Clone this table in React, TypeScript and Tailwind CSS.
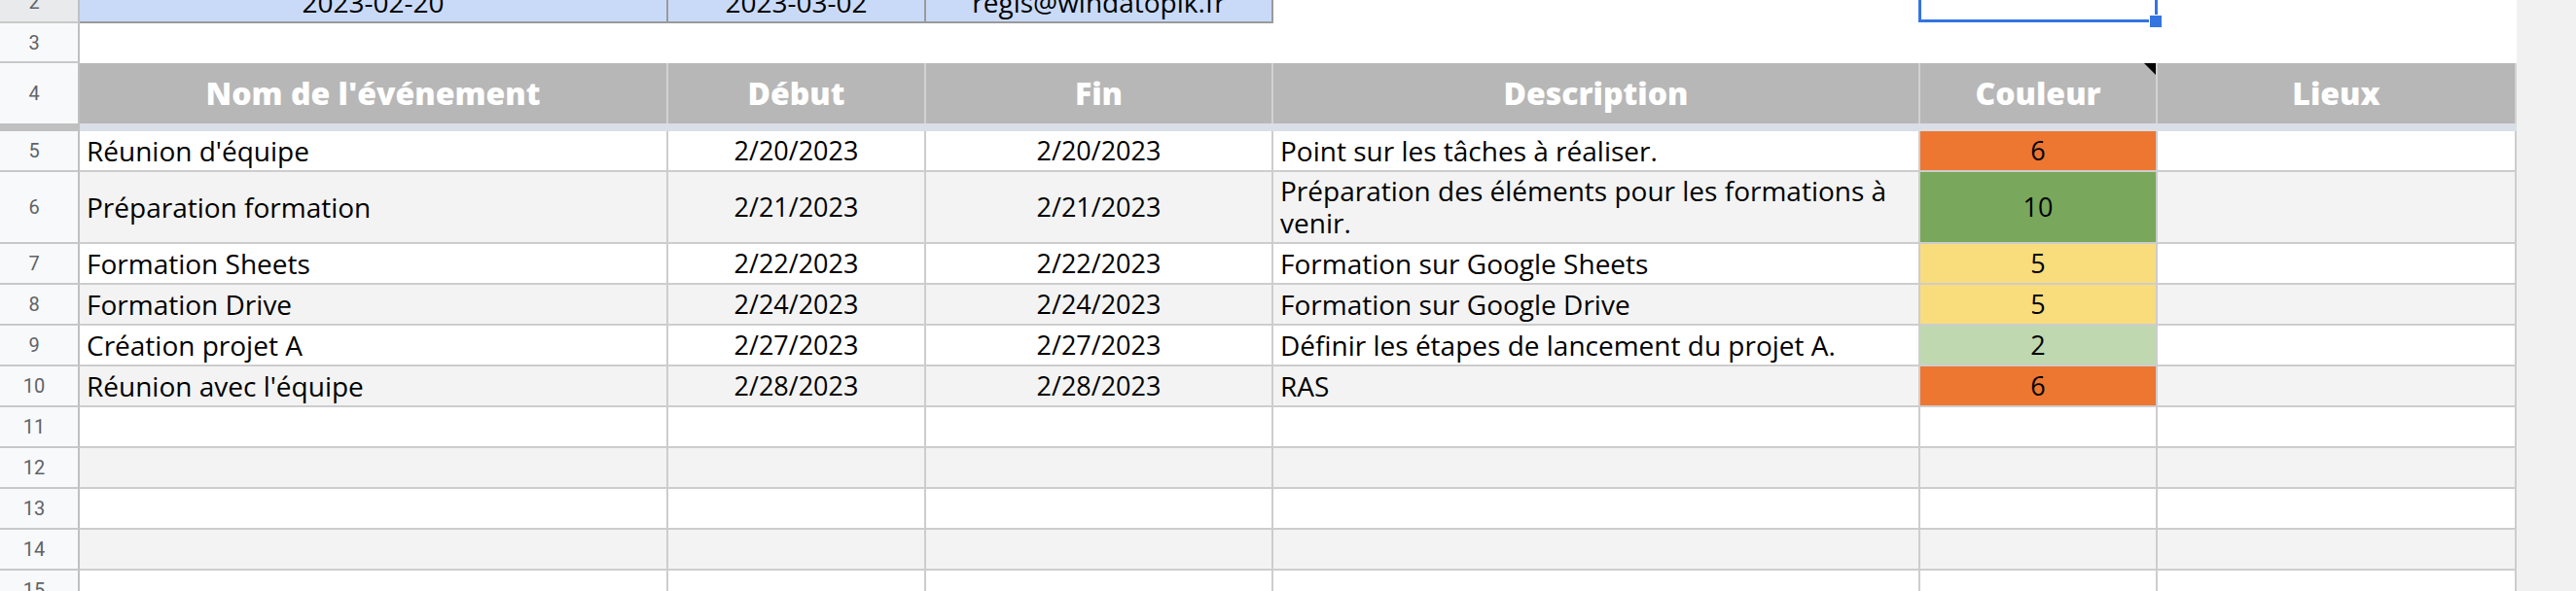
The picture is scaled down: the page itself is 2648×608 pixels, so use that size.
import React from "react";

const W = [
  "w-[605px]",
  "w-[265px]",
  "w-[357px]",
  "w-[665px]",
  "w-[244px]",
  "w-[369px]",
];

type RHProps = { n: string; h: string; bg?: string; noBottom?: boolean };

function RH({ n, h, bg = "bg-[#f8f9fa]", noBottom }: RHProps) {
  return (
    <div
      className={`${h} ${bg} w-[82px] shrink-0 flex items-center justify-center pr-[10px] border-r-2 border-r-[#c0c0c0] ${
        noBottom ? "" : "border-b-2 border-b-[#c8c8c8]"
      } font-['Roboto',sans-serif] text-[20px] text-[#5f6368]`}
    >
      {n}
    </div>
  );
}

type Ev = {
  n: string;
  d: string;
  f: string;
  desc: React.ReactNode;
  c: string;
  color: string;
  tall?: boolean;
};

const data: Ev[] = [
  {
    n: "Réunion d'équipe",
    d: "2/20/2023",
    f: "2/20/2023",
    desc: "Point sur les tâches à réaliser.",
    c: "6",
    color: "bg-[#ed7631]",
  },
  {
    n: "Préparation formation",
    d: "2/21/2023",
    f: "2/21/2023",
    desc: (
      <>
        Préparation des éléments pour les formations à
        <br />
        venir.
      </>
    ),
    c: "10",
    color: "bg-[#79a75b]",
    tall: true,
  },
  {
    n: "Formation Sheets",
    d: "2/22/2023",
    f: "2/22/2023",
    desc: "Formation sur Google Sheets",
    c: "5",
    color: "bg-[#f9dc7c]",
  },
  {
    n: "Formation Drive",
    d: "2/24/2023",
    f: "2/24/2023",
    desc: "Formation sur Google Drive",
    c: "5",
    color: "bg-[#f9dc7c]",
  },
  {
    n: "Création projet A",
    d: "2/27/2023",
    f: "2/27/2023",
    desc: "Définir les étapes de lancement du projet A.",
    c: "2",
    color: "bg-[#bfd8b0]",
  },
  {
    n: "Réunion avec l'équipe",
    d: "2/28/2023",
    f: "2/28/2023",
    desc: "RAS",
    c: "6",
    color: "bg-[#ed7631]",
  },
];

const cellB = "border-r-2 border-b-2 border-[#cdcdcd] shrink-0 flex items-center";

export default function App() {
  const font = "font-['Open_Sans',sans-serif]";
  return (
    <div className={`w-[2648px] h-[608px] overflow-hidden bg-white flex ${font}`}>
      <div className="w-[2587px] shrink-0 flex flex-col -mt-[18px]">
        {/* Row 2 */}
        <div className="flex h-[42px] shrink-0">
          <RH n="2" h="h-[42px]" bg="bg-[#e9eaec]" />
          {["2023-02-20", "2023-03-02", "regis@windatopik.fr"].map((t, i) => (
            <div
              key={i}
              className={`${W[i]} h-[42px] shrink-0 bg-[#c9daf8] border-r-2 border-b-2 border-[#9a9a9a] flex items-center justify-center text-[28px] text-black`}
            >
              {t}
            </div>
          ))}
          <div className={`${W[3]} h-[42px] shrink-0`} />
          <div className={`${W[4]} h-[42px] shrink-0 relative`}>
            <div className="absolute left-[-2px] right-0 top-[-4px] bottom-[1px] border-[3px] border-[#3474e0] z-10" />
            <div className="absolute left-[235px] top-[33px] w-[14px] h-[14px] bg-[#3474e0] border border-white z-20" />
          </div>
          <div className={`${W[5]} h-[42px] shrink-0`} />
        </div>

        {/* Row 3 */}
        <div className="flex h-[41px] shrink-0">
          <RH n="3" h="h-[41px]" />
          <div className="flex-1 bg-white" />
        </div>

        {/* Row 4 header */}
        <div className="flex h-[62px] shrink-0">
          <RH n="4" h="h-[62px]" noBottom />
          {["Nom de l'événement", "Début", "Fin", "Description", "Couleur", "Lieux"].map((t, i) => (
            <div
              key={i}
              className={`${W[i]} h-[62px] shrink-0 relative bg-[#b7b7b7] border-r-2 border-r-[#d2d2d2] flex items-center justify-center text-white font-extrabold text-[32px]`}
            >
              {t}
              {i === 4 && (
                <div className="absolute top-0 right-0 w-0 h-0 border-l-[12px] border-l-transparent border-t-[12px] border-t-black" />
              )}
            </div>
          ))}
        </div>

        {/* Freeze bar */}
        <div className="flex h-[8px] shrink-0">
          <div className="w-[82px] shrink-0 bg-[#c0c0c0]" />
          <div className="flex-1 bg-[#dadee6]" />
        </div>

        {/* Data rows */}
        {data.map((r, idx) => {
          const h = r.tall ? "h-[74px]" : "h-[42px]";
          const bg = idx % 2 === 0 ? "bg-white" : "bg-[#f3f3f3]";
          return (
            <div key={idx} className={`flex ${h} shrink-0`}>
              <RH n={String(idx + 5)} h={h} />
              <div className={`${W[0]} ${h} ${bg} ${cellB} pl-[7px] text-[28px] text-black`}>{r.n}</div>
              <div className={`${W[1]} ${h} ${bg} ${cellB} justify-center text-[27px] text-black`}>{r.d}</div>
              <div className={`${W[2]} ${h} ${bg} ${cellB} justify-center text-[27px] text-black`}>{r.f}</div>
              <div className={`${W[3]} ${h} ${bg} ${cellB} pl-[7px] text-[28px] leading-[33px] text-black`}>
                <div>{r.desc}</div>
              </div>
              <div className={`${W[4]} ${h} ${r.color} ${cellB} justify-center text-[27px] text-black`}>{r.c}</div>
              <div className={`${W[5]} ${h} ${bg} ${cellB}`} />
            </div>
          );
        })}

        {/* Empty rows */}
        {[11, 12, 13, 14, 15].map((n) => {
          const bg = n % 2 === 1 ? "bg-white" : "bg-[#f3f3f3]";
          return (
            <div key={n} className="flex h-[42px] shrink-0">
              <RH n={String(n)} h="h-[42px]" />
              {W.map((w, i) => (
                <div key={i} className={`${w} h-[42px] ${bg} ${cellB}`} />
              ))}
            </div>
          );
        })}
      </div>
      <div className="flex-1 bg-[#f1f1f1]" />
    </div>
  );
}
